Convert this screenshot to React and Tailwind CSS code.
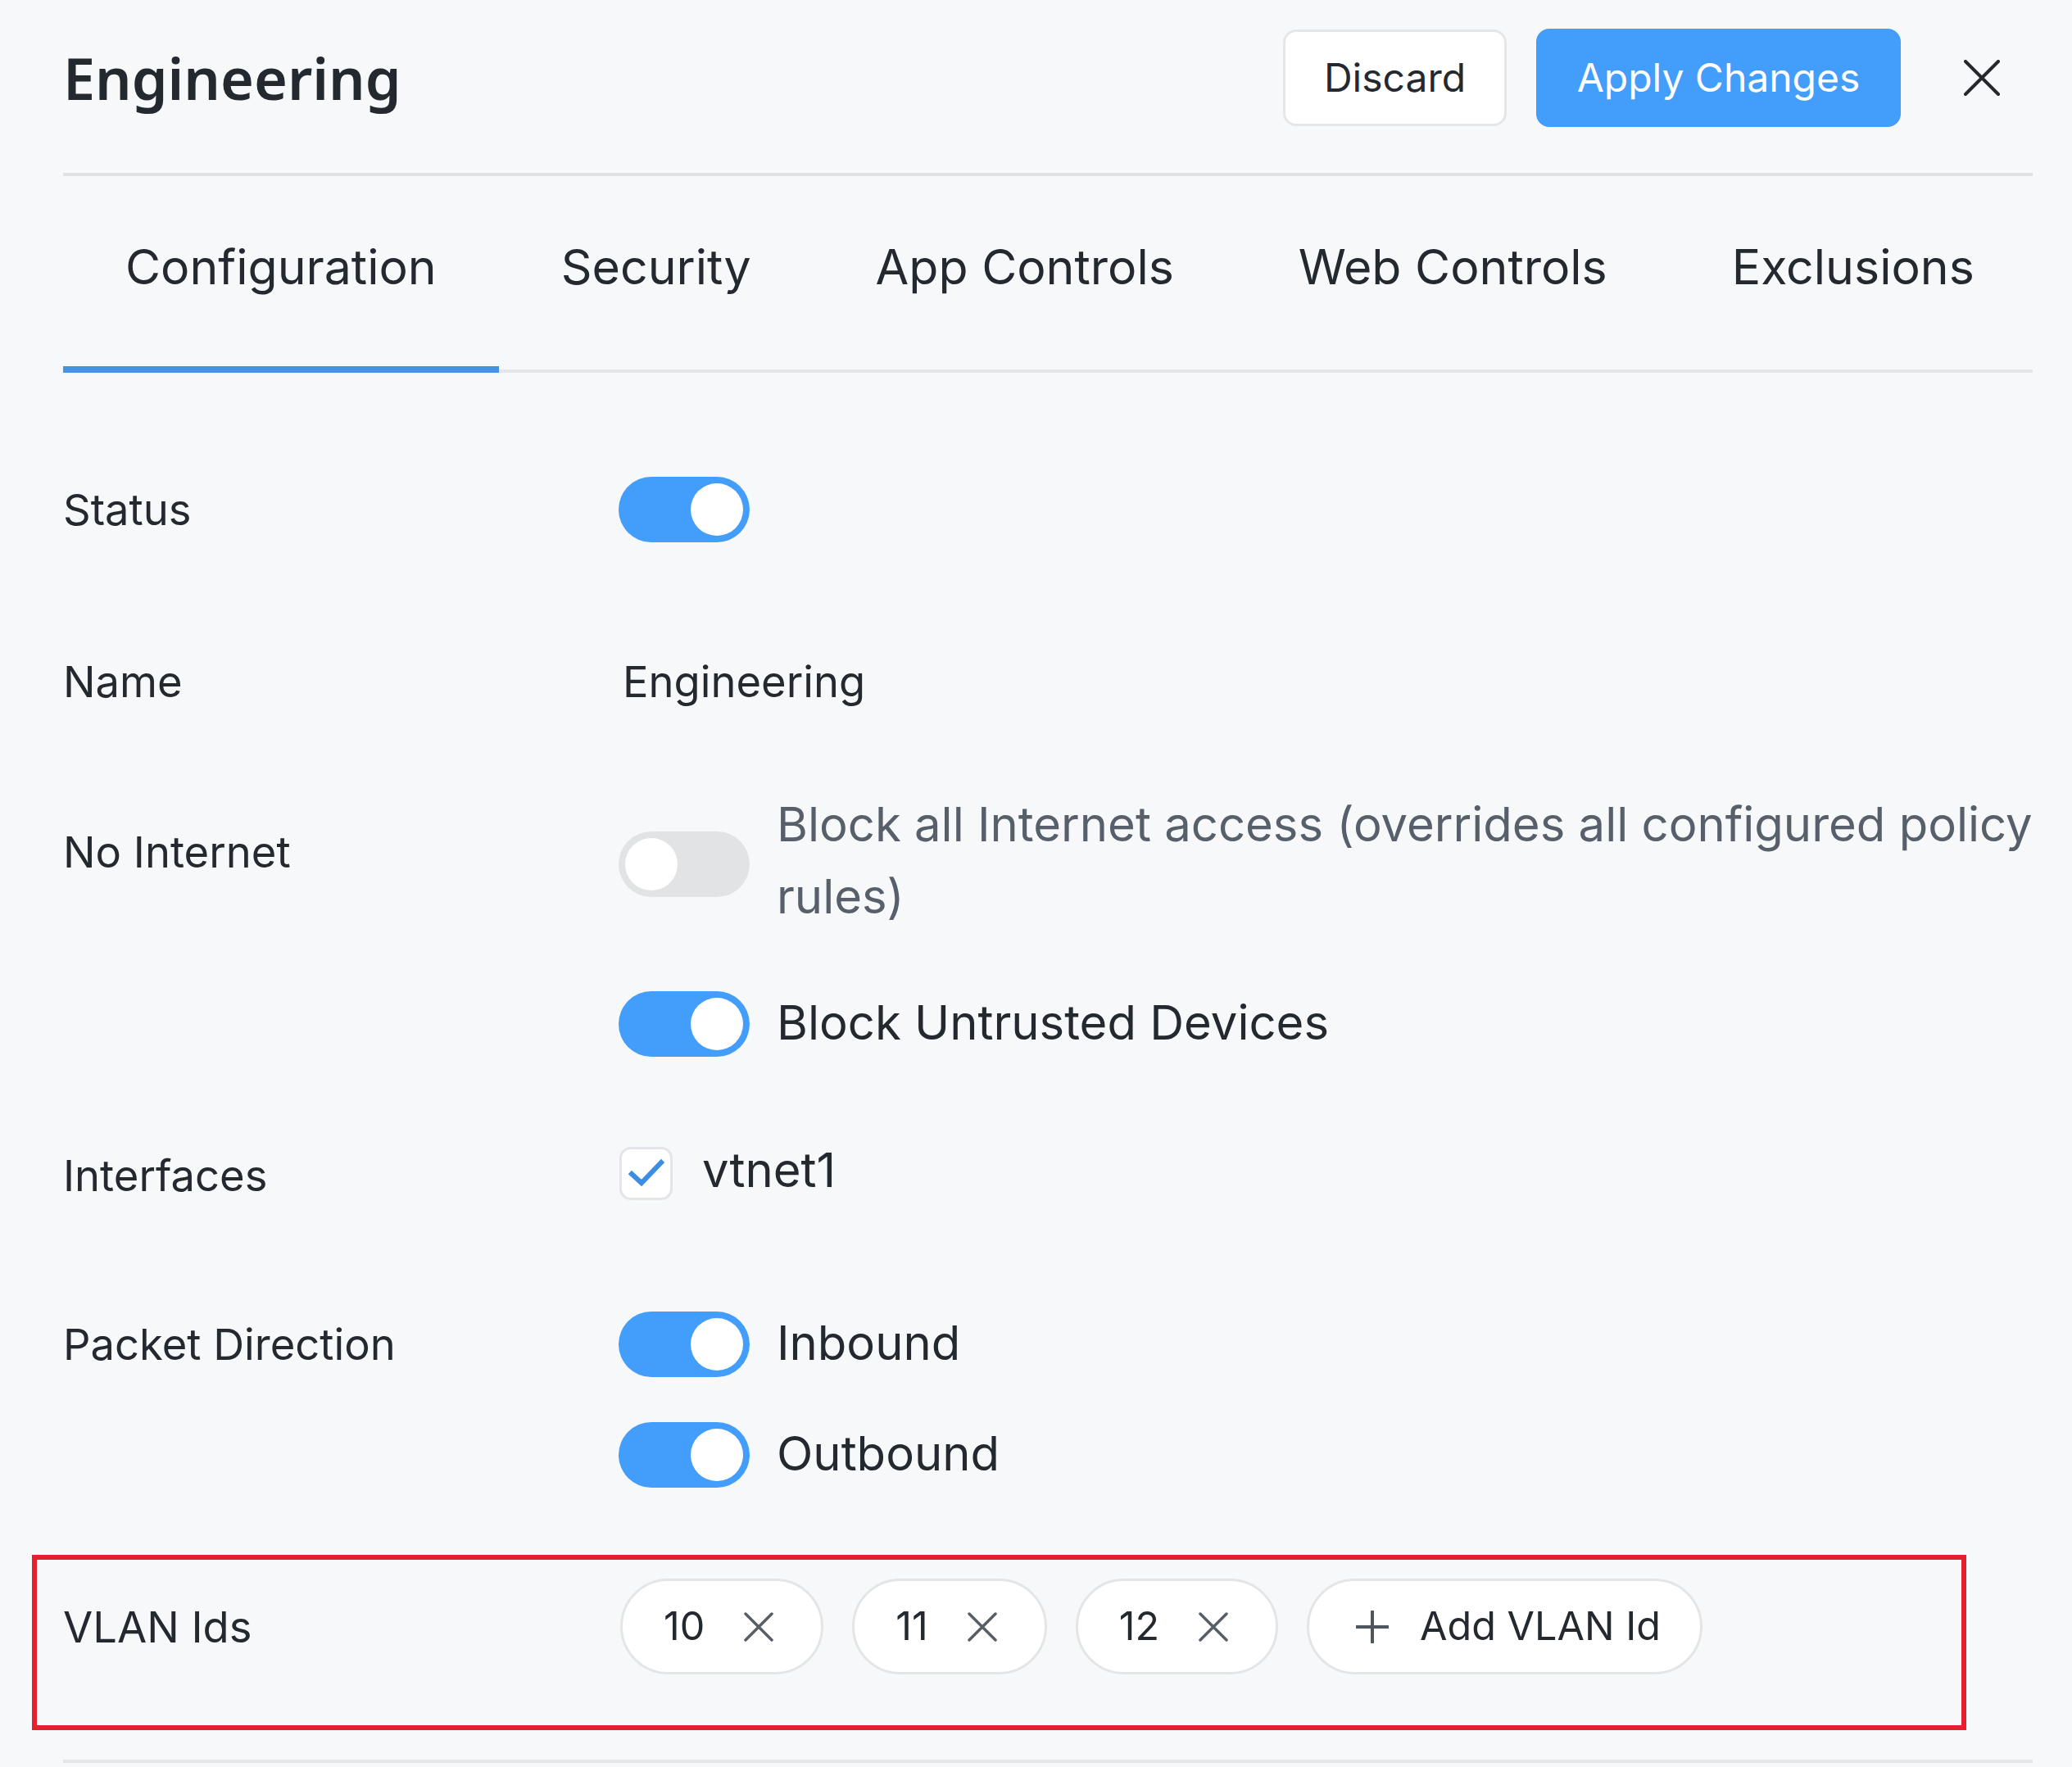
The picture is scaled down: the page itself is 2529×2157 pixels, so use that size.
import React from "react";

const font = { fontFamily: "Inter, 'Noto Sans', sans-serif" };

function Toggle({ on }) {
  return (
    <div
      className={`flex items-center w-[160px] h-[80px] rounded-full px-[8px] shrink-0 ${
        on ? "bg-[#429dfb] justify-end" : "bg-[#e2e3e4] justify-start px-[7px]"
      }`}
    >
      <div className="w-[64px] h-[64px] rounded-full bg-white" />
    </div>
  );
}

function XIcon({ size = 36, stroke = "#585e66", width = 3.5 }) {
  return (
    <svg width={size} height={size} viewBox="0 0 36 36" fill="none">
      <path d="M2 2L34 34M34 2L2 34" stroke={stroke} strokeWidth={width} strokeLinecap="round" />
    </svg>
  );
}

function Chip({ label }) {
  return (
    <div className="flex items-center h-[117px] rounded-full border-[3px] border-[#e4e5e7] bg-white pl-[50px] pr-[58px] gap-[48px]">
      <span className="text-[48.5px] leading-none text-[#24292f]">{label}</span>
      <XIcon />
    </div>
  );
}

export default function App() {
  const tabs = ["Configuration", "Security", "App Controls", "Web Controls", "Exclusions"];
  return (
    <div className="min-h-screen bg-[#f6f8fa] pl-[77px] pr-[48px] text-[#24292f]" style={font}>
      {/* header */}
      <div className="flex items-center justify-between pt-[35px] pb-[56px] border-b-4 border-[#dfe1e4]">
        <h1
          className="text-[70px] leading-none font-semibold text-[#24292f]"
          style={{ fontFamily: "'Noto Sans', sans-serif" }}
        >
          Engineering
        </h1>
        <div className="flex items-center">
          <button className="h-[118px] w-[273px] rounded-[16px] border-[3px] border-[#e5e6e8] bg-white text-[48px] text-[#24292f]">
            Discard
          </button>
          <button className="ml-[36px] h-[120px] w-[445px] rounded-[16px] bg-[#439dfb] text-[48px] text-white">
            Apply Changes
          </button>
          <button className="ml-[57px] mr-[20px] p-[20px]">
            <svg width="44" height="44" viewBox="0 0 44 44" fill="none">
              <path d="M2 2L42 42M42 2L2 42" stroke="#25292e" strokeWidth="4" strokeLinecap="round" />
            </svg>
          </button>
        </div>
      </div>

      {/* tabs */}
      <div className="flex border-b-4 border-[#e3e5e8]">
        {tabs.map((t, i) => (
          <div key={t} className="relative px-[76px] pt-[76px] pb-[90px] text-[59px] leading-[70px] whitespace-nowrap">
            {t}
            {i === 0 && <span className="absolute left-0 right-0 -bottom-[4px] h-[8px] bg-[#4493e6]" />}
          </div>
        ))}
      </div>

      {/* Status */}
      <div className="flex items-center mt-[127px]">
        <div className="w-[678px] text-[52.5px] leading-[80px]">Status</div>
        <Toggle on />
      </div>

      {/* Name */}
      <div className="flex items-center mt-[138px]">
        <div className="w-[678px] text-[52.5px] leading-[64px]">Name</div>
        <div className="text-[52.5px] leading-[64px] pl-[5px]">Engineering</div>
      </div>

      {/* No Internet */}
      <div className="flex items-start mt-[98px]">
        <div className="w-[678px] shrink-0 mt-[46px] text-[52.5px] leading-[64px]">No Internet</div>
        <div className="flex flex-col flex-1">
          <div className="flex items-start gap-[33px]">
            <div className="mt-[53px]">
              <Toggle on={false} />
            </div>
            <p className="text-[58px] leading-[88px] text-[#57606a] -mr-[40px]">
              Block all Internet access (overrides all configured policy rules)
            </p>
          </div>
          <div className="flex items-center gap-[33px] mt-[72px]">
            <Toggle on />
            <span className="text-[58px] leading-[64px] mb-[4px]">Block Untrusted Devices</span>
          </div>
        </div>
      </div>

      {/* Interfaces */}
      <div className="flex items-center mt-[106px]">
        <div className="w-[679px] text-[52.5px] leading-[64px] pt-[6px]">Interfaces</div>
        <div className="flex items-center gap-[36px]">
          <div className="w-[65px] h-[65px] rounded-[14px] border-[3px] border-[#e3e5e8] bg-white flex items-center justify-center">
            <svg width="44" height="36" viewBox="0 0 44 36" fill="none">
              <path d="M4 19L16 30L40 5" stroke="#3d8de3" strokeWidth="6" strokeLinecap="square" />
            </svg>
          </div>
          <span className="text-[58px] leading-[64px] mb-[8px]">vtnet1</span>
        </div>
      </div>

      {/* Packet Direction */}
      <div className="flex items-start mt-[133px]">
        <div className="w-[678px] text-[52.5px] leading-[80px]">Packet Direction</div>
        <div className="flex flex-col gap-[55px]">
          <div className="flex items-center gap-[33px]">
            <Toggle on />
            <span className="text-[58px] leading-[64px] mb-[4px]">Inbound</span>
          </div>
          <div className="flex items-center gap-[33px]">
            <Toggle on />
            <span className="text-[58px] leading-[64px] mb-[4px]">Outbound</span>
          </div>
        </div>
      </div>

      {/* VLAN Ids (highlighted) */}
      <div className="flex items-center mt-[82px] -ml-[38px] w-[2361px] border-[6px] border-[#e5202e] pl-[32px] pt-[23px] pb-[62px]">
        <div className="w-[680px] text-[52.5px] leading-[64px]">VLAN Ids</div>
        <div className="flex items-center gap-[35px]">
          <Chip label="10" />
          <Chip label="11" />
          <Chip label="12" />
          <div className="flex items-center h-[117px] rounded-full border-[3px] border-[#e4e5e7] bg-white pl-[57px] pr-[48px] gap-[38px]">
            <svg width="40" height="40" viewBox="0 0 40 40" fill="none">
              <path d="M20 1V39M1 20H39" stroke="#50565e" strokeWidth="4" strokeLinecap="round" />
            </svg>
            <span className="text-[48.5px] leading-none">Add VLAN Id</span>
          </div>
        </div>
      </div>

      <div className="mt-[36px] h-[4px] bg-[#e3e5e8]" />
    </div>
  );
}
